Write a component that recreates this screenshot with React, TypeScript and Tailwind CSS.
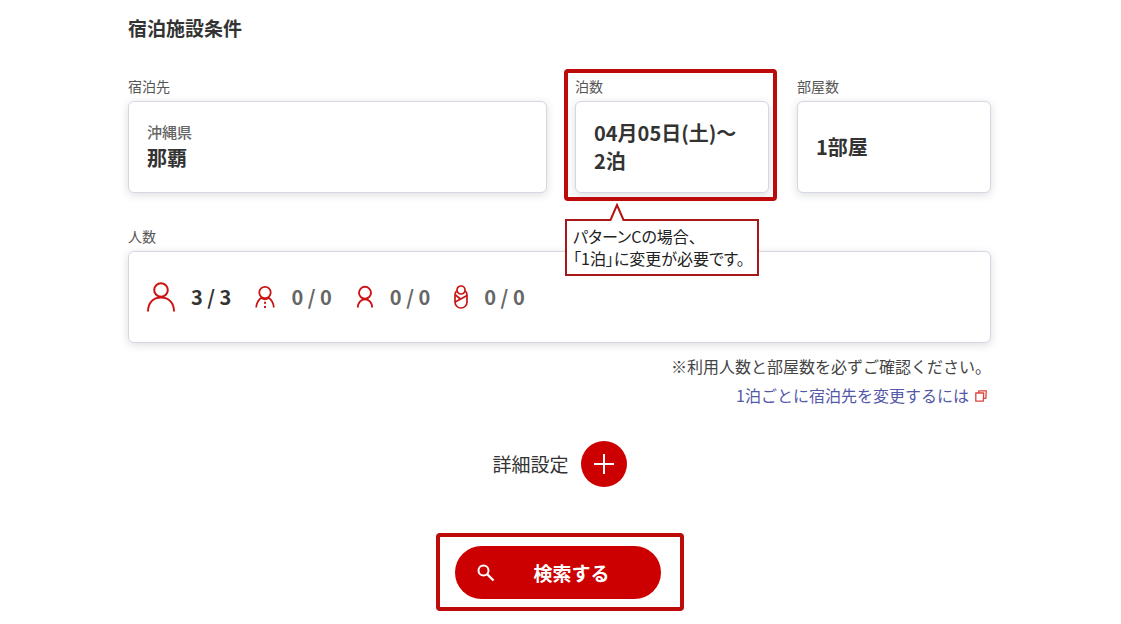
import type { ReactNode } from "react";

const fieldBox =
  "mt-1.5 flex h-[92px] w-full cursor-pointer flex-col justify-center rounded-md border border-[#d5d8e2] bg-white px-[18px] text-left shadow-[0_2px_9px_rgba(60,64,80,0.18)]";

function Field({
  id,
  label,
  children,
  overlay,
}: {
  id: string;
  label: string;
  children: ReactNode;
  overlay?: ReactNode;
}) {
  return (
    <div className="relative">
      <div id={id} className="text-sm leading-[18px] text-[#555]">
        {label}
      </div>
      <button type="button" aria-labelledby={`${id} ${id}-value`} className={fieldBox}>
        <span id={`${id}-value`} className="block w-full">
          {children}
        </span>
      </button>
      {overlay}
    </div>
  );
}

function AdultIcon() {
  return (
    <svg width="28" height="30" viewBox="0 0 28 30" fill="none" stroke="#cc1414" strokeWidth="2" aria-hidden="true">
      <circle cx="14" cy="8" r="6.8" />
      <path d="M1 29.5C1 20.5 6.5 15.5 14 15.5S27 20.5 27 29.5" />
    </svg>
  );
}

function ChildIcon() {
  return (
    <svg width="20" height="24" viewBox="0 0 20 24" fill="none" stroke="#cc1414" strokeWidth="1.8" aria-hidden="true">
      <circle cx="10" cy="7.5" r="5.7" />
      <path d="M1.2 22.5C1.5 18.2 3.2 15 6.3 12.8C8.5 14.5 11.5 14.5 13.7 12.8C16.8 15 18.5 18.2 18.8 22.5" />
      <path d="M10 16.8v2M10 21v2" strokeWidth="2" />
    </svg>
  );
}

function YouthIcon() {
  return (
    <svg width="18" height="24" viewBox="0 0 18 24" fill="none" stroke="#cc1414" strokeWidth="1.9" aria-hidden="true">
      <circle cx="9" cy="7.8" r="6" />
      <path d="M1.8 22.5C2 18 4.8 14.3 9 14.3S16 18 16.2 22.5" />
    </svg>
  );
}

function BabyIcon() {
  return (
    <svg width="14" height="24" viewBox="0 0 14 24" fill="none" stroke="#cc1414" strokeWidth="1.7" aria-hidden="true">
      <circle cx="7" cy="5" r="4" />
      <path d="M2.8 6C1.4 7 1 8.500 1 10v7a6 6 0 0 0 12 0V10c0-1.500-.4-3-1.800-4" />
      <path d="M1.500 10l5.500 4.500M13 10.500L1.200 17" />
    </svg>
  );
}

function Callout() {
  return (
    <div className="absolute -left-[10px] top-[142px] z-10 w-[194px] border-2 border-[#a81818] bg-white px-1.5 pt-1 pb-[5px] text-base leading-[22px] whitespace-nowrap text-[#222] [font-feature-settings:'palt']">
      <svg
        className="absolute -top-[18px] left-[42px]"
        width="16"
        height="18"
        viewBox="0 0 16 18"
        aria-hidden="true"
      >
        <path d="M1.5 17L8 2l6.5 15v1h-13z" fill="#fff" />
        <path d="M0 17h1.5L8 2l6.5 15H16" fill="none" stroke="#b51212" strokeWidth="2" />
      </svg>
      パターンCの場合、
      <br />
      「1泊」に変更が必要です。
    </div>
  );
}

export default function App() {
  return (
    <main className="bg-white pt-3.5 pr-[130px] pb-3 pl-32 font-['Noto_Sans_CJK_JP',sans-serif] text-[#333]">
      <h1 className="text-[19px] leading-7 font-bold">宿泊施設条件</h1>

      <div className="mt-[35px] grid grid-cols-[1fr_194px_194px] gap-x-7 gap-y-[34px]">
        <Field id="place" label="宿泊先">
          <span className="block text-[15px] leading-6 font-medium text-[#666]">沖縄県</span>
          <span className="block pb-0.5 text-xl leading-7 font-bold">那覇</span>
        </Field>
        <Field
          id="nights"
          label="泊数"
          overlay={
            <>
              <div className="pointer-events-none absolute -top-2 -right-2 -bottom-2 -left-[11px] rounded border-4 border-[#bd0a0a]" />
              <Callout />
            </>
          }
        >
          <span className="block text-xl leading-7 font-bold whitespace-nowrap">04月05日(土)～</span>
          <span className="block text-xl leading-7 font-bold">2泊</span>
        </Field>
        <Field id="rooms" label="部屋数">
          <span className="block text-xl leading-7 font-bold">1部屋</span>
        </Field>

        <div className="col-span-3">
          <Field id="guests" label="人数">
            <span className="flex items-center text-xl leading-7 font-bold text-[#666]">
              <AdultIcon />
              <span className="ml-4 text-[#333]">3 / 3</span>
              <span className="ml-6">
                <ChildIcon />
              </span>
              <span className="ml-4">0 / 0</span>
              <span className="ml-6">
                <YouthIcon />
              </span>
              <span className="ml-4">0 / 0</span>
              <span className="ml-6">
                <BabyIcon />
              </span>
              <span className="ml-4">0 / 0</span>
            </span>
          </Field>
        </div>
      </div>

      <div className="mt-[9px] text-right text-base leading-[29px]">
        <p className="text-[#444]">※利用人数と部屋数を必ずご確認ください。</p>
        <p>
          <a href="#change" className="inline-flex items-center gap-1.5 pr-1 text-[#5358a8]">
            1泊ごとに宿泊先を変更するには
            <svg width="12" height="12" viewBox="0 0 12 12" fill="none" stroke="#e0443e" strokeWidth="1.3" strokeLinejoin="round" aria-hidden="true">
              <path d="M3.4 3L3.800.8h7.500l-.5 7.600H8.500" />
              <path d="M.8 3h7.900l-.4 8.200H.8z" />
            </svg>
          </a>
        </p>
      </div>

      <div className="mt-[31px] flex items-center justify-center gap-3">
        <span id="details" className="text-[19px] leading-7">
          詳細設定
        </span>
        <button
          type="button"
          aria-labelledby="details"
          className="flex size-[46px] cursor-pointer items-center justify-center rounded-full bg-[#cc0000]"
        >
          <svg width="22" height="22" viewBox="0 0 22 22" stroke="#fff" strokeWidth="2" aria-hidden="true">
            <path d="M11 1v20M1 11h20" />
          </svg>
        </button>
      </div>

      <div className="mx-auto mt-[46px] w-fit rounded border-4 border-[#bd0a0a] pt-[9px] pr-[19px] pb-2 pl-[15px]">
        <button
          type="button"
          className="relative block h-[53px] w-[206px] cursor-pointer rounded-full bg-[#cc0000] pl-7 text-[19px] leading-7 font-bold text-white"
        >
          <svg
            className="absolute top-[18px] left-[22px]"
            width="18"
            height="18"
            viewBox="0 0 18 18"
            fill="none"
            stroke="#fff"
            strokeWidth="2"
            aria-hidden="true"
          >
            <circle cx="6.5" cy="6.5" r="5" />
            <path d="M10 10l6.5 6.5" strokeWidth="2.4" />
          </svg>
          検索する
        </button>
      </div>
    </main>
  );
}
